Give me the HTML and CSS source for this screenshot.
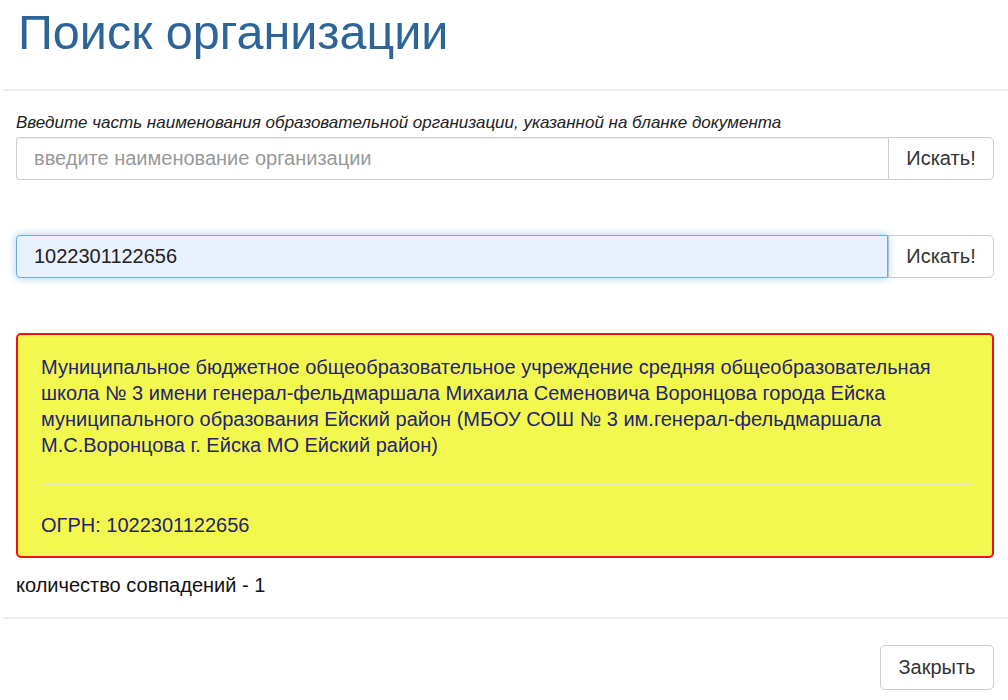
FILE: index.html
```html
<!DOCTYPE html>
<html>
  <head>
    <title>Поиск организации</title>
    <link rel="stylesheet" href="styles.css">
  </head>

  <body>
    <div class="modal">
      <div class="modal-header">
        <h1 class="modal-title">Поиск организации</h1>
      </div>

      <div class="modal-body">
        <label class="hint">Введите часть наименования образовательной организации, указанной на бланке документа</label>
        <div class="input-group">
          <input type="text" class="form-control" placeholder="введите наименование организации" />
          <button class="btn btn-addon">Искать!</button>
        </div>

        <div class="input-group second">
          <input type="text" class="form-control focused" value="1022301122656" />
          <button class="btn btn-addon">Искать!</button>
        </div>

        <div class="result">
          <p class="result-name">
            Муниципальное бюджетное общеобразовательное учреждение средняя общеобразовательная
            школа № 3 имени генерал-фельдмаршала Михаила Семеновича Воронцова города Ейска
            муниципального образования Ейский район (МБОУ СОШ № 3 им.генерал-фельдмаршала
            М.С.Воронцова г. Ейска МО Ейский район)
          </p>
          <hr />
          <p class="result-ogrn">ОГРН: 1022301122656</p>
        </div>

        <div class="count">количество совпадений - 1</div>
      </div>

      <div class="modal-footer">
        <button class="btn">Закрыть</button>
      </div>
    </div>
  </body>
</html>
```

FILE: styles.css
```css
body {
  font-family: "Liberation Sans", Arial, sans-serif;
  background-color: white;
  margin: 0;
  color: #222;
}

.modal {
  width: 1008px;
}

.modal-header {
  margin-left: 3px;
  height: 91px;
  border-bottom: 2px solid #ececec;
  box-sizing: border-box;
}

.modal-title {
  margin: 0;
  padding: 4px 0 0 15px;
  font-size: 48.5px;
  font-weight: normal;
  color: #2d6598;
  line-height: 56px;
}

.modal-body {
  padding: 22px 14px 0 16px;
}

.hint {
  display: block;
  font-style: italic;
  font-size: 17px;
  line-height: 20px;
  color: #222;
  margin-bottom: 4px;
}

.input-group {
  display: flex;
  height: 43px;
}

.input-group.second {
  margin-top: 55px;
}

.form-control {
  flex: 1;
  border: 1px solid #ccc;
  border-right: none;
  border-radius: 4px 0 0 4px;
  padding: 0 17px;
  font-family: inherit;
  font-size: 20px;
  color: #222;
  outline: none;
  box-shadow: inset 0 1px 1px rgba(0, 0, 0, 0.075);
}

.form-control::placeholder {
  color: #999;
}

.form-control.focused {
  background-color: #e8f1fd;
  border: 1px solid #66afe9;
  box-shadow: 0 0 8px rgba(102, 175, 233, 0.6);
  position: relative;
  z-index: 1;
}

.btn {
  background: white;
  border: 1px solid #ccc;
  border-radius: 5px;
  font-family: inherit;
  font-size: 20px;
  color: #333;
  cursor: pointer;
}

.btn-addon {
  width: 106px;
  border-radius: 0 5px 5px 0;
}

.result {
  margin-top: 55px;
  background-color: #f3f84f;
  border: 2px solid #f20f0f;
  border-radius: 5px;
  padding: 19px 23px 18px 23px;
  color: #232372;
  font-size: 20px;
  line-height: 26px;
}

.result p {
  margin: 0;
}

.result hr {
  border: none;
  border-top: 1px solid #e8e8d8;
  margin: 26px 0 27px 0;
}

.count {
  margin-top: 14px;
  font-size: 20px;
  line-height: 26px;
  color: #111;
}

.modal-footer {
  margin-left: 3px;
  margin-top: 19px;
  border-top: 2px solid #ececec;
  padding: 26px 14px 0 0;
  display: flex;
  justify-content: flex-end;
}

.modal-footer .btn {
  width: 114px;
  height: 45px;
}
```
